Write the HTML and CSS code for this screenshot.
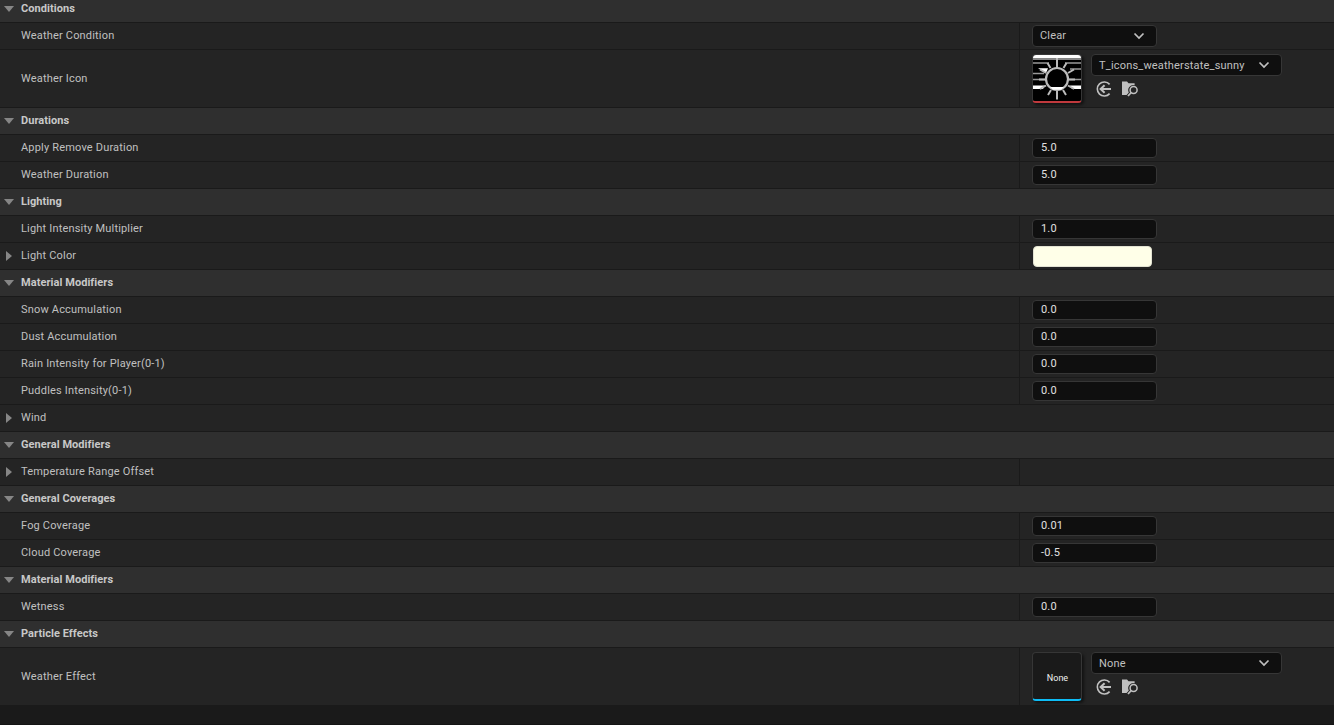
FILE: index.html
```
<!DOCTYPE html>
<html lang="en">

<head>
    <meta charset="UTF-8">
    <meta name="viewport" content="width=device-width, initial-scale=1.0">
    <title>Weather Details</title>
    <link rel="stylesheet" href="styles.css">
</head>

<body>
    <!-- Shared icons -->
    <svg class="icon-defs">
        <symbol id="chevron" viewBox="0 0 12 8">
            <path d="M1.5 1.5L6 6L10.5 1.5" fill="none" stroke="#c0c0c0" stroke-width="1.7" />
        </symbol>
        <symbol id="use-asset" viewBox="0 0 16 16">
            <path d="M13.6 3.4A7 7 0 1 0 13.6 12.6" fill="none" stroke="#c0c0c0" stroke-width="1.6" />
            <path d="M15 8H5M8.6 4.2L4.6 8L8.6 11.8" fill="none" stroke="#c0c0c0" stroke-width="2" />
        </symbol>
        <symbol id="browse" viewBox="0 0 16 16">
            <path d="M0 0.5H5L6.5 2.3H12.6V4.3A5.1 5.1 0 0 0 6.8 11.6L4.6 14H0Z" fill="#c0c0c0" />
            <circle cx="11.6" cy="9" r="3.5" fill="none" stroke="#c0c0c0" stroke-width="1.5" />
            <path d="M9.2 11.5L6 15" stroke="#c0c0c0" stroke-width="1.8" />
        </symbol>
    </svg>

    <div class="details">
        <div class="category first"><i class="arrow down"></i>Conditions</div>
        <div class="row">
            <div class="name">Weather Condition</div>
            <div class="value"><div class="combo">Clear<svg class="chevron"><use href="#chevron" /></svg></div></div>
        </div>
        <div class="row tall">
            <div class="name">Weather Icon</div>
            <div class="value">
                <div class="thumb sunny">
                    <svg viewBox="0 0 48 48">
                        <rect width="48" height="48" fill="#000" />
                        <path d="M0 0H48V3.5H0Z" fill="#fff" />
                        <path d="M0 3.5H48V5H0Z" fill="#888" />
                        <path d="M0 8H16M32 8H48M0 18.5H11M37 14H48M0 24.5H12M36 24.5H48" stroke="#999" stroke-width="1.4" />
                        <path d="M5 13.2H15L13 18ZM0 30.5H12L10 34H0ZM37 30.5H48V34H39Z" fill="#fff" />
                        <circle cx="24" cy="24" r="11" fill="#000" stroke="#bbb" stroke-width="2.2" />
                        <path d="M17 32H31L28 34.8H20Z" fill="#fff" />
                        <path d="M24 3V13M24 36V44.5M30.5 13L33.5 8M17.5 13L14.5 8M35 18L41 14.5M13 18L7 14.5M36 24.5H42M12 24.5H6M35 30.5L41 34M13 30.5L7 34M30 35L33 40M18 35L15 40" stroke="#bbb" stroke-width="2" />
                    </svg>
                </div>
                <div class="asset">
                    <div class="combo wide">T_icons_weatherstate_sunny<svg class="chevron"><use href="#chevron" /></svg></div>
                    <div class="tools"><svg><use href="#use-asset" /></svg><svg><use href="#browse" /></svg></div>
                </div>
            </div>
        </div>

        <div class="category"><i class="arrow down"></i>Durations</div>
        <div class="row">
            <div class="name">Apply Remove Duration</div>
            <div class="value"><div class="field">5.0</div></div>
        </div>
        <div class="row">
            <div class="name">Weather Duration</div>
            <div class="value"><div class="field">5.0</div></div>
        </div>

        <div class="category"><i class="arrow down"></i>Lighting</div>
        <div class="row">
            <div class="name">Light Intensity Multiplier</div>
            <div class="value"><div class="field">1.0</div></div>
        </div>
        <div class="row">
            <div class="name"><i class="arrow right"></i>Light Color</div>
            <div class="value"><div class="color"></div></div>
        </div>

        <div class="category"><i class="arrow down"></i>Material Modifiers</div>
        <div class="row">
            <div class="name">Snow Accumulation</div>
            <div class="value"><div class="field">0.0</div></div>
        </div>
        <div class="row">
            <div class="name">Dust Accumulation</div>
            <div class="value"><div class="field">0.0</div></div>
        </div>
        <div class="row">
            <div class="name">Rain Intensity for Player(0-1)</div>
            <div class="value"><div class="field">0.0</div></div>
        </div>
        <div class="row">
            <div class="name">Puddles Intensity(0-1)</div>
            <div class="value"><div class="field">0.0</div></div>
        </div>
        <div class="row">
            <div class="name"><i class="arrow right"></i>Wind</div>
        </div>

        <div class="category"><i class="arrow down"></i>General Modifiers</div>
        <div class="row">
            <div class="name"><i class="arrow right"></i>Temperature Range Offset</div>
            <div class="value"></div>
        </div>

        <div class="category"><i class="arrow down"></i>General Coverages</div>
        <div class="row">
            <div class="name">Fog Coverage</div>
            <div class="value"><div class="field">0.01</div></div>
        </div>
        <div class="row">
            <div class="name">Cloud Coverage</div>
            <div class="value"><div class="field">-0.5</div></div>
        </div>

        <div class="category"><i class="arrow down"></i>Material Modifiers</div>
        <div class="row">
            <div class="name">Wetness</div>
            <div class="value"><div class="field">0.0</div></div>
        </div>

        <div class="category"><i class="arrow down"></i>Particle Effects</div>
        <div class="row tall last">
            <div class="name">Weather Effect</div>
            <div class="value">
                <div class="thumb empty">None</div>
                <div class="asset">
                    <div class="combo wide">None<svg class="chevron"><use href="#chevron" /></svg></div>
                    <div class="tools"><svg><use href="#use-asset" /></svg><svg><use href="#browse" /></svg></div>
                </div>
            </div>
        </div>
    </div>
</body>

</html>
```
FILE: styles.css
```
* {
    box-sizing: border-box;
}

body {
    margin: 0;
    height: 725px;
    overflow: hidden;
    background-color: #1a1a1a;
    border-bottom: 1px solid #141414;
    color: #c0c0c0;
    font-family: Roboto, 'Liberation Sans', sans-serif;
    font-size: 11px;
    letter-spacing: 0.18px;
    line-height: 14px;
}

.icon-defs {
    display: none;
}

.category,
.row {
    display: flex;
    height: 27px;
    border-bottom: 1px solid #1a1a1a;
}

.category {
    align-items: center;
    background-color: #2f2f2f;
    color: #c8c8c8;
    font-weight: bold;
    letter-spacing: 0.06px;
}

.category.first {
    height: 23px;
    padding-bottom: 4px;
}

.row {
    background-color: #242424;
}

.row.tall {
    height: 58px;
}

.row.last {
    height: 57px;
    border-bottom: none;
}

.name {
    display: flex;
    align-items: center;
    width: 1019px;
    padding-left: 21px;
}

.name .arrow {
    margin-left: -21px;
}

/* Expander arrows */
.arrow {
    flex: none;
    width: 21px;
    height: 10px;
}

.arrow::before {
    content: "";
    display: block;
    background-color: #868686;
}

.arrow.down::before {
    width: 10px;
    height: 6px;
    margin: 2px 0 0 4px;
    clip-path: polygon(0 0, 100% 0, 50% 100%);
}

.arrow.right::before {
    width: 6px;
    height: 10px;
    margin-left: 6px;
    clip-path: polygon(0 0, 100% 50%, 0 100%);
}

.value {
    display: flex;
    flex: 1;
    align-items: center;
    padding-left: 12px;
    border-left: 1px solid #1a1a1a;
}

.tall .value {
    align-items: flex-start;
    padding-top: 4px;
}

.field,
.combo {
    width: 125px;
    border: 1px solid #363636;
    border-radius: 4px;
    background-color: #0f0f0f;
}

.field {
    height: 20px;
    padding: 2px 8px;
    color: #e0e0e0;
}

.combo {
    display: flex;
    align-items: center;
    justify-content: space-between;
    height: 22px;
    padding: 0 11px 1px 7px;
}

.combo.wide {
    width: 191px;
    padding-top: 2px;
    padding-bottom: 0;
}

.chevron {
    width: 12px;
    height: 8px;
    margin-top: 1px;
}

.wide .chevron {
    margin-top: -2px;
}

.color {
    width: 119px;
    height: 21px;
    margin-top: 1px;
    margin-left: 1px;
    border: 1px solid #e2e2d2;
    border-radius: 4px;
    background-color: #ffffe8;
}

.thumb {
    width: 50px;
    height: 49px;
    border: 1px solid #363636;
    border-radius: 4px;
    box-shadow: 2px 2px 3px rgba(0, 0, 0, 0.5);
    overflow: hidden;
}

.thumb svg {
    display: block;
    width: 48px;
    height: 48px;
}

.thumb.sunny {
    border-bottom: 2px solid #c0393d;
}

.thumb.empty {
    padding-left: 1px;
    border-bottom: 2px solid #0ebcf5;
    background-color: #1a1a1a;
    color: #f0f0f0;
    font-size: 9px;
    letter-spacing: 0;
    line-height: 50px;
    text-align: center;
}

.asset {
    margin-left: 9px;
}

.tools {
    display: flex;
    gap: 10px;
    padding: 5px 0 0 5px;
}

.tools svg {
    width: 16px;
    height: 16px;
}
```
